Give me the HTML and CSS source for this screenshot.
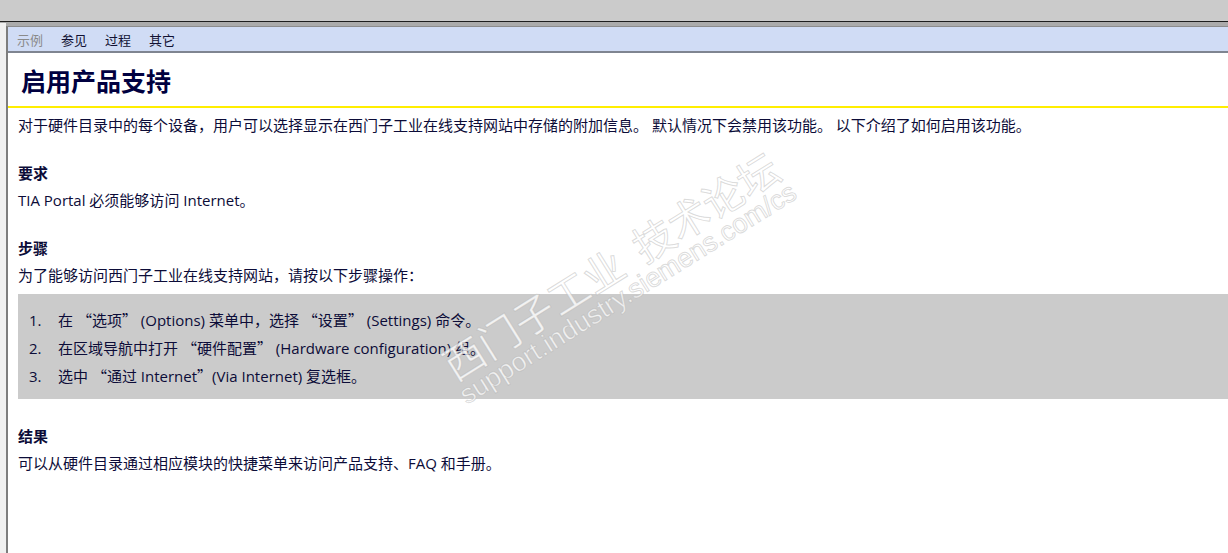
FILE: index.html
```html
<!DOCTYPE html>
<html lang="zh-CN">
<head>
<meta charset="utf-8">
<title>启用产品支持</title>
<link rel="stylesheet" href="styles.css">
</head>
<body>
<div class="chrome"></div>
<div class="window">
  <div class="side"></div>
  <div class="pane">
    <nav class="tabs">
      <span class="tab tab-disabled">示例</span>
      <span class="tab">参见</span>
      <span class="tab">过程</span>
      <span class="tab">其它</span>
    </nav>
    <header class="title-block">
      <h1 class="title">启用产品支持</h1>
    </header>
    <main class="content">
      <p class="para">对于硬件目录中的每个设备，用户可以选择显示在西门子工业在线支持网站中存储的附加信息。 默认情况下会禁用该功能。 以下介绍了如何启用该功能。</p>
      <h2 class="head">要求</h2>
      <p class="para">TIA Portal 必须能够访问 Internet。</p>
      <h2 class="head">步骤</h2>
      <p class="para">为了能够访问西门子工业在线支持网站，请按以下步骤操作：</p>
      <ol class="steps">
        <li class="step"><span class="num">1.</span><span>在 <span class="q">“</span>选项<span class="q">”</span> (Options) 菜单中，选择 <span class="q">“</span>设置<span class="q">”</span> (Settings) 命令。</span></li>
        <li class="step"><span class="num">2.</span><span>在区域导航中打开 <span class="q">“</span>硬件配置<span class="q">”</span> (Hardware configuration) 组。</span></li>
        <li class="step"><span class="num">3.</span><span>选中 <span class="q">“</span>通过 Internet<span class="q">”</span>(Via Internet) 复选框。</span></li>
      </ol>
      <h2 class="head head-result">结果</h2>
      <p class="para">可以从硬件目录通过相应模块的快捷菜单来访问产品支持、FAQ 和手册。</p>
    </main>
  </div>
</div>
<div class="watermark">
  <div class="wm-cn">西门子工业&nbsp;&nbsp;技术论坛</div>
  <div class="wm-url">support.industry.siemens.com/cs</div>
</div>
</body>
</html>
```

FILE: styles.css
```css
html, body {
  margin: 0;
  padding: 0;
}
body {
  width: 1228px;
  height: 553px;
  overflow: hidden;
  background: #cbcbcb;
  position: relative;
  font-family: "Open Sans", "Noto Sans CJK SC", sans-serif;
  color: #0c0c38;
}
.chrome {
  height: 21px;
  background: #cbcbcb;
}
.window {
  border-top: 1px solid #1e1e1e;
  display: flex;
  height: 531px;
  background: #ababab;
}
.side {
  width: 6px;
  margin-top: 1px;
  background: #f0f0f0;
}
.pane {
  flex: 1;
  margin-top: 4px;
  border-left: 2px solid #7d7d7d;
  border-top: 1px solid #8c8c8c;
  background: #ffffff;
  min-width: 0;
}
.tabs {
  height: 24px;
  background: #d0dcf5;
  border-bottom: 2px solid #7f8591;
  display: flex;
  align-items: center;
  gap: 18px;
  padding-left: 9px;
  font-size: 13px;
}
.tab {
  color: #111133;
}
.tab-disabled {
  color: #8a8a8a;
}
.title-block {
  height: 55px;
  border-bottom: 2px solid #ffee00;
  display: flex;
  align-items: center;
  padding-left: 13px;
  padding-top: 4px;
  box-sizing: border-box;
}
.title {
  margin: 0;
  font-size: 25px;
  font-weight: 700;
  color: #000040;
  line-height: 1;
}
.content {
  padding: 4px 0 0 10px;
  font-size: 15px;
  line-height: 27px;
}
.para {
  margin: 0;
  white-space: nowrap;
}
.q {
  font-family: "Noto Sans CJK SC", sans-serif;
}
.head {
  margin: 21px 0 0;
  font-size: 15px;
  font-weight: 700;
  line-height: 27px;
}
.head-result {
  margin-top: 24px;
}
.steps {
  list-style: none;
  margin: 5px 0 0;
  padding: 12px 0 9px 11px;
  background: #cbcbcb;
}
.step {
  display: flex;
  line-height: 28px;
  white-space: nowrap;
}
.num {
  width: 29px;
  flex: none;
}
.watermark {
  position: absolute;
  left: 617px;
  top: 276px;
  transform: translate(-50%, -50%) rotate(-32deg);
  text-align: center;
  pointer-events: none;
  color: rgba(255, 255, 255, 0.75);
  -webkit-text-stroke: 1px rgba(175, 175, 175, 0.45);
  white-space: nowrap;
}
.wm-cn {
  font-family: "Noto Sans CJK SC", sans-serif;
  font-size: 41px;
  line-height: 42px;
  letter-spacing: 0;
  font-weight: 400;
}
.wm-url {
  font-family: "Liberation Sans", Arial, sans-serif;
  font-size: 27px;
  line-height: 27px;
}
```
